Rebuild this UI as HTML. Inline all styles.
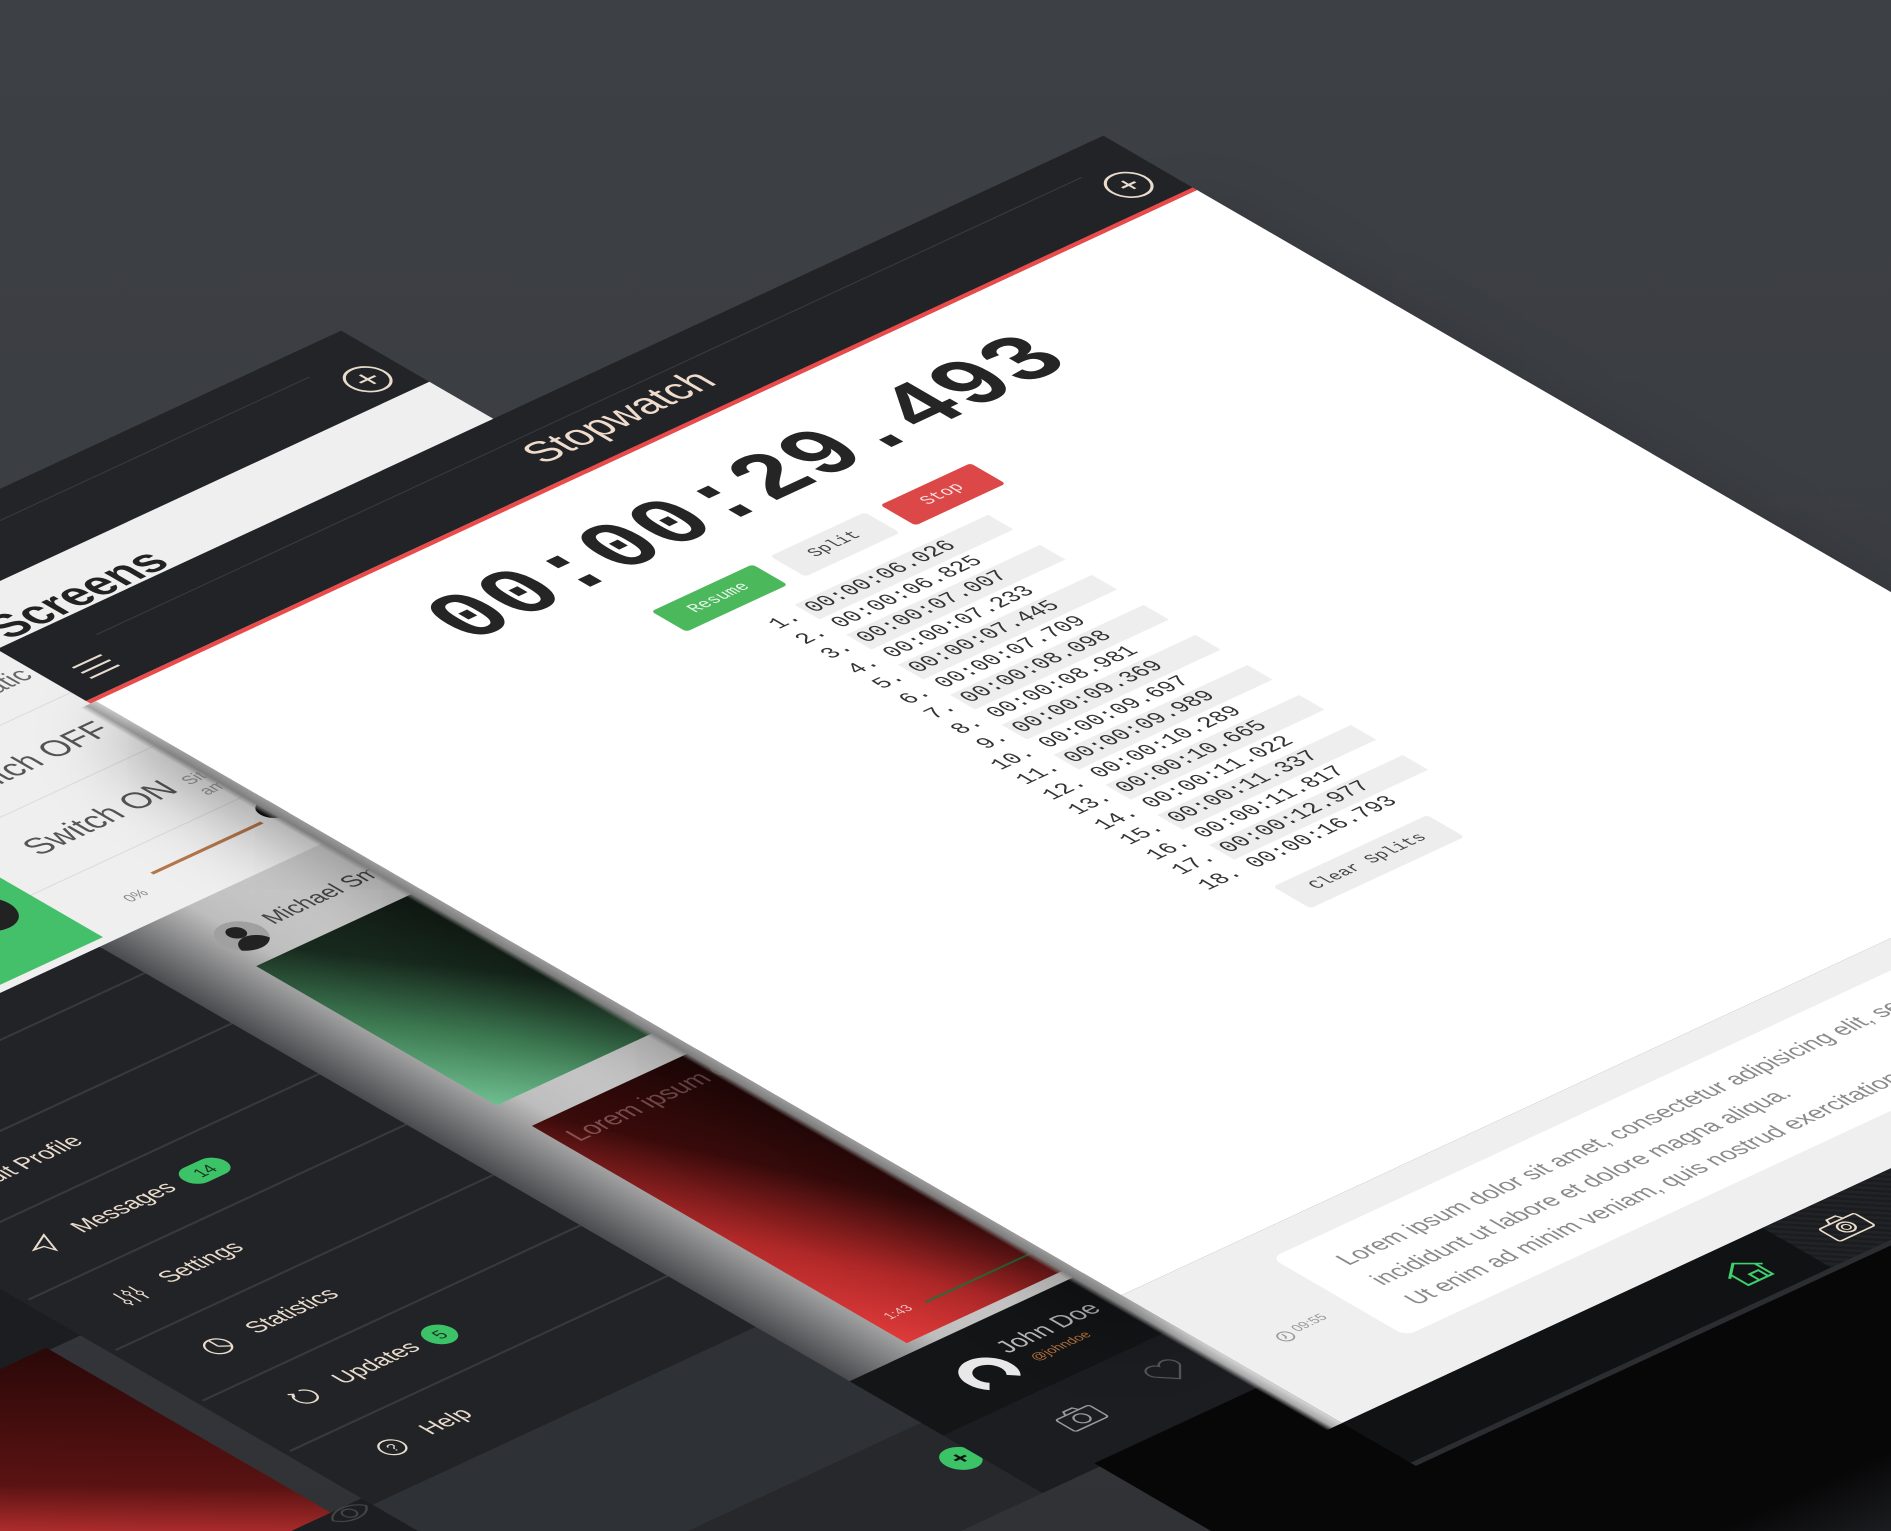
<!DOCTYPE html>
<html style="width:1891px;height:1531px;overflow:hidden;"><head><meta charset="utf-8">
<style>
html,body{margin:0;padding:0;}
body{width:1891px;height:1531px;overflow:hidden;position:relative;background:linear-gradient(180deg,#3d4045 0%,#393c41 55%,#303236 100%);font-family:"Liberation Sans",sans-serif;}
#clip{position:absolute;left:0;top:0;width:1891px;height:1531px;overflow:hidden;}
#scene{position:absolute;left:0;top:0;width:0;height:0;transform-origin:0 0;transform:matrix(1.101,-0.511,1.1027,0.639,96,701);}
.a{position:absolute;}
.mono{font-family:"Liberation Mono",monospace;}
.row{position:absolute;left:396px;font-family:"Liberation Mono",monospace;font-size:18px;line-height:23px;color:#333;white-space:pre;}
.bar{position:absolute;left:436px;width:176px;height:23px;background:#eeeeee;}
.sep{position:absolute;left:-555px;width:343px;height:1.5px;background:#38393e;}
.mi{position:absolute;left:-470px;font-size:19px;color:#eadccc;line-height:24px;}
.ic{position:absolute;}
</style></head><body>
<div id="clip">
<div id="scene">

<!-- ===== LEFT SCREEN ===== -->
<div class="a" style="left:-900px;top:-223px;width:1346px;height:80px;background:#232428;"></div>
<div class="a" style="left:-900px;top:-196px;width:1290px;height:1px;background:#3a3b40;"></div>
<svg class="ic" style="left:399px;top:-188px" width="36" height="36" viewBox="0 0 36 36"><circle cx="18" cy="18" r="15" fill="none" stroke="#eadccc" stroke-width="2"/><path d="M18 11v14M11 18h14" stroke="#eadccc" stroke-width="2"/></svg>
<div class="a" style="left:-900px;top:-143px;width:1346px;height:360px;background:#efefef;"></div>
<div class="a" style="left:-75px;top:-122px;font-size:38px;font-weight:bold;color:#222;line-height:44px;white-space:nowrap;">App Screens</div>
<div class="a" style="left:-310px;top:-66px;width:300px;text-align:right;font-size:22px;color:#666;white-space:nowrap;">Presentation static</div>
<div class="a" style="left:-900px;top:-18px;width:900px;height:1px;background:#dcdcdc;"></div>
<div class="a" style="left:-900px;top:62px;width:900px;height:1px;background:#dcdcdc;"></div>
<div class="a" style="left:-900px;top:142px;width:900px;height:1px;background:#dcdcdc;"></div>
<div class="a" style="left:-300px;top:10px;width:300px;text-align:right;font-size:27px;color:#555;white-space:nowrap;padding-right:18px;box-sizing:border-box;">Switch OFF</div>
<div class="a" style="left:-8px;top:20px;font-size:14px;color:#999;">Lorem</div>
<div class="a" style="left:-318px;top:88px;width:300px;text-align:right;font-size:27px;color:#555;white-space:nowrap;padding-right:18px;box-sizing:border-box;">Switch ON</div>
<div class="a" style="left:-26px;top:98px;font-size:14px;color:#999;">Sit amet</div>
<div class="a" style="left:-520px;top:96px;width:318px;height:112px;background:#45c06a;"></div>
<div class="a" style="left:-262px;top:120px;width:42px;height:42px;border-radius:50%;background:#222;"></div>
<div class="a" style="left:-158px;top:178px;font-size:12px;color:#888;">0%</div>
<div class="a" style="left:-122px;top:171px;width:100px;height:3px;background:#b5764a;"></div>
<div class="a" style="left:-16px;top:154px;width:22px;height:22px;border-radius:50%;background:#111;"></div>

<!-- left-most column -->
<div class="a" style="left:-900px;top:215px;width:345px;height:330px;background:#1c1d20;"></div>
<div class="a" style="left:-900px;top:542px;width:312px;height:260px;background:linear-gradient(to top right,#f24848 0%,#e03c3c 35%,#5a1212 58%,#2a0808 100%);"></div>
<div class="a" style="left:-900px;top:800px;width:345px;height:400px;background:#1d1e21;"></div>
<svg class="ic" style="left:-596px;top:795px" width="34" height="26" viewBox="0 0 34 26"><path d="M2 13C8 3 26 3 32 13C26 23 8 23 2 13Z" fill="none" stroke="#444" stroke-width="1.5"/><circle cx="17" cy="13" r="5" fill="none" stroke="#444" stroke-width="1.5"/></svg>

<!-- drawer -->
<div class="a" style="left:-560px;top:215px;width:348px;height:595px;background:#222327;"></div>
<div class="sep" style="top:255px"></div><div class="sep" style="top:334px"></div><div class="sep" style="top:413px"></div><div class="sep" style="top:492px"></div><div class="sep" style="top:571px"></div><div class="sep" style="top:650px"></div><div class="sep" style="top:729px"></div>
<div class="mi" style="left:-482px;top:362px;">Edit Profile</div>
<svg class="ic" style="left:-512px;top:440px" width="24" height="24" viewBox="0 0 24 24"><path d="M3 12L21 3L14 21L11 13Z" fill="none" stroke="#eadccc" stroke-width="1.5"/></svg>
<div class="mi" style="top:440px;">Messages</div>
<div class="a" style="left:-373px;top:441px;width:38px;height:22px;border-radius:11px;background:#3cc367;color:#1d3322;font-size:14px;line-height:22px;text-align:center;">14</div>
<svg class="ic" style="left:-512px;top:519px" width="24" height="24" viewBox="0 0 24 24"><path d="M5 3v18M12 3v18M19 3v18" stroke="#eadccc" stroke-width="1.3"/><circle cx="5" cy="16" r="2.2" fill="#222327" stroke="#eadccc"/><circle cx="12" cy="8" r="2.2" fill="#222327" stroke="#eadccc"/><circle cx="19" cy="13" r="2.2" fill="#222327" stroke="#eadccc"/></svg>
<div class="mi" style="top:519px;">Settings</div>
<svg class="ic" style="left:-512px;top:598px" width="24" height="24" viewBox="0 0 24 24"><circle cx="12" cy="12" r="9" fill="none" stroke="#eadccc" stroke-width="1.5"/><path d="M12 12V3M12 12L19 17" stroke="#eadccc" stroke-width="1.5"/></svg>
<div class="mi" style="top:598px;">Statistics</div>
<svg class="ic" style="left:-512px;top:677px" width="24" height="24" viewBox="0 0 24 24"><path d="M8 5A8 8 0 1 0 14 4" fill="none" stroke="#eadccc" stroke-width="1.5"/><path d="M5 3L8 5L6 8" fill="none" stroke="#eadccc" stroke-width="1.5"/></svg>
<div class="mi" style="top:677px;">Updates</div>
<div class="a" style="left:-390px;top:677px;width:24px;height:24px;border-radius:12px;background:#3cc367;color:#1d3322;font-size:14px;line-height:24px;text-align:center;">5</div>
<svg class="ic" style="left:-512px;top:756px" width="24" height="24" viewBox="0 0 24 24"><circle cx="12" cy="12" r="9" fill="none" stroke="#eadccc" stroke-width="1.5"/><text x="12" y="16.5" font-size="12" text-anchor="middle" fill="#eadccc" font-family="Liberation Sans">?</text></svg>
<div class="mi" style="top:756px;">Help</div>
<div class="a" style="left:-560px;top:810px;width:410px;height:150px;background:#2e3135;"></div>
<div class="a" style="left:-560px;top:960px;width:410px;height:110px;background:#26282b;"></div>
<div class="a" style="left:-237px;top:993px;width:28px;height:28px;border-radius:50%;background:#3cc367;color:#111;font-size:20px;line-height:28px;text-align:center;font-weight:bold;">+</div>

<!-- card column -->
<div class="a" style="left:-212px;top:215px;width:232px;height:685px;background:linear-gradient(to right,#4a4b4e 0%,#bdbdbd 35%,#e2e2e2 100%);"></div>
<div class="a" style="left:-149px;top:245px;width:36px;height:36px;border-radius:50%;background:#a0a0a0;overflow:hidden;"><div style="position:absolute;left:11px;top:6px;width:14px;height:14px;border-radius:50%;background:#222;"></div><div style="position:absolute;left:5px;top:20px;width:26px;height:20px;border-radius:13px 13px 0 0;background:#222;"></div></div>
<div class="a" style="left:-105px;top:250px;font-size:19px;color:#444;white-space:nowrap;">Michael Smith</div>
<div class="a" style="left:-150px;top:295px;width:175px;height:218px;background:linear-gradient(to top right,#6fbf90 0%,#3d7a52 30%,#182a1e 60%,#121a14 100%);"></div>
<div class="a" style="left:-150px;top:545px;width:175px;height:340px;background:linear-gradient(to top right,#e03a3a 0%,#b02828 25%,#3a0b0b 55%,#1a0606 100%);"></div>
<div class="a" style="left:-140px;top:560px;font-size:21px;color:rgba(255,200,200,.35);white-space:nowrap;">Lorem ipsum dolor</div>
<div class="a" style="left:-138px;top:849px;font-size:11px;color:#f0c0c0;">1:43</div>
<div class="a" style="left:-105px;top:856px;width:130px;height:2px;background:#2e6b3a;"></div>
<div class="a" style="left:-212px;top:895px;width:232px;height:85px;background:#141517;"></div>
<div class="a" style="left:-155px;top:925px;width:40px;height:40px;border-radius:50%;border:9px solid #e8e8e8;border-bottom-color:transparent;box-sizing:border-box;"></div>
<div class="a" style="left:-108px;top:918px;font-size:20px;color:#bbb;white-space:nowrap;">John Doe</div>
<div class="a" style="left:-100px;top:944px;font-size:11px;color:#b8743f;">@johndoe</div>
<div class="a" style="left:-212px;top:980px;width:232px;height:90px;background:#1c1d21;"></div>
<svg class="ic" style="left:-144px;top:1006px" width="34" height="26" viewBox="0 0 34 26"><rect x="2" y="6" width="30" height="18" rx="2" fill="none" stroke="#999" stroke-width="1.5"/><path d="M11 6L13 2H21L23 6" fill="none" stroke="#999" stroke-width="1.5"/><circle cx="17" cy="15" r="5.5" fill="none" stroke="#999" stroke-width="1.5"/></svg>
<svg class="ic" style="left:-58px;top:1002px" width="30" height="26" viewBox="0 0 30 26"><path d="M15 24L3 12A6.5 6.5 0 0 1 15 5A6.5 6.5 0 0 1 27 12Z" fill="none" stroke="#555" stroke-width="1.5"/></svg>

<!-- black void under main panel -->
<div class="a" style="left:-160px;top:1065px;width:1900px;height:500px;background:linear-gradient(to bottom,#070708 0%,#070708 62%,#1f2023 78%,#2c2e32 92%);"></div>

<!-- ===== MAIN PANEL ===== -->
<div class="a" style="left:-14px;top:0;width:14px;height:1130px;background:linear-gradient(to right,rgba(0,0,0,0),#a8a8a8 40%,#d6d6d6);"></div>
<div class="a" style="left:0;top:0;width:1000px;height:930px;background:#fff;box-shadow:-30px 30px 60px rgba(0,0,0,.35);"></div>
<div class="a" style="left:0;top:930px;width:1000px;height:200px;background:#efefef;"></div>
<div class="a" style="left:108px;top:958px;width:900px;height:122px;background:#fff;border-radius:8px;"></div>
<div class="a" style="left:140px;top:975px;font-size:19.5px;line-height:31px;color:#8a8a8a;white-space:nowrap;">Lorem ipsum dolor sit amet, consectetur adipisicing elit, sed do eiusmod tempor<br>incididunt ut labore et dolore magna aliqua.<br>Ut enim ad minim veniam, quis nostrud exercitation ullamco laboris nisi ut</div>
<svg class="ic" style="left:40px;top:1025px" width="14" height="14" viewBox="0 0 14 14"><circle cx="7" cy="7" r="5.5" fill="none" stroke="#999" stroke-width="1.2"/><path d="M7 3.5V7L5 9" stroke="#999" stroke-width="1.2" fill="none"/></svg>
<div class="a" style="left:57px;top:1024px;font-size:11px;color:#999;">09:55</div>

<!-- header -->
<div class="a" style="left:-5px;top:-85px;width:1005px;height:81px;background:#222327;"></div>
<div class="a" style="left:-5px;top:-4px;width:1005px;height:4px;background:#ea4a4a;"></div>
<div class="a" style="left:58px;top:-58px;width:895px;height:1px;background:#3a3b40;"></div>
<div class="a" style="left:17px;top:-39px;width:26px;height:2px;background:#eadccc;"></div>
<div class="a" style="left:17px;top:-31px;width:26px;height:2px;background:#eadccc;"></div>
<div class="a" style="left:17px;top:-23px;width:26px;height:2px;background:#eadccc;"></div>
<div class="a" style="left:361px;top:-58px;width:300px;text-align:center;font-size:34px;line-height:44px;color:#f0dccc;">Stopwatch</div>
<svg class="ic" style="left:952px;top:-50px" width="36" height="36" viewBox="0 0 36 36"><circle cx="18" cy="18" r="15" fill="none" stroke="#eadccc" stroke-width="2"/><path d="M18 12v12M12 18h12" stroke="#eadccc" stroke-width="2"/></svg>

<!-- time -->
<div class="a mono" style="left:240px;top:40px;font-size:76px;line-height:80px;font-weight:bold;color:#252525;white-space:nowrap;">00:00:29.493</div>

<!-- buttons -->
<div class="a mono" style="left:358px;top:146px;width:92px;height:32px;background:#4cb85c;border-radius:3px;color:#e9f7ea;font-size:14px;line-height:32px;text-align:center;">Resume</div>
<div class="a mono" style="left:466px;top:146px;width:86px;height:32px;background:#ededed;border-radius:3px;color:#444;font-size:14px;line-height:32px;text-align:center;">Split</div>
<div class="a mono" style="left:566px;top:146px;width:82px;height:32px;background:#dc4848;border-radius:3px;color:#fbe3e3;font-size:14px;line-height:32px;text-align:center;">Stop</div>

<!-- splits -->
<div class="bar" style="top:198px"></div><div class="bar" style="top:245px"></div><div class="bar" style="top:292px"></div><div class="bar" style="top:339px"></div><div class="bar" style="top:386px"></div><div class="bar" style="top:433px"></div><div class="bar" style="top:480px"></div><div class="bar" style="top:527px"></div><div class="bar" style="top:574px"></div>
<div class="row" style="top:198px"> 1. 00:00:06.026</div>
<div class="row" style="top:221.5px"> 2. 00:00:06.825</div>
<div class="row" style="top:245px"> 3. 00:00:07.007</div>
<div class="row" style="top:268.5px"> 4. 00:00:07.233</div>
<div class="row" style="top:292px"> 5. 00:00:07.445</div>
<div class="row" style="top:315.5px"> 6. 00:00:07.709</div>
<div class="row" style="top:339px"> 7. 00:00:08.098</div>
<div class="row" style="top:362.5px"> 8. 00:00:08.981</div>
<div class="row" style="top:386px"> 9. 00:00:09.369</div>
<div class="row" style="top:409.5px">10. 00:00:09.697</div>
<div class="row" style="top:433px">11. 00:00:09.989</div>
<div class="row" style="top:456.5px">12. 00:00:10.289</div>
<div class="row" style="top:480px">13. 00:00:10.665</div>
<div class="row" style="top:503.5px">14. 00:00:11.022</div>
<div class="row" style="top:527px">15. 00:00:11.337</div>
<div class="row" style="top:550.5px">16. 00:00:11.817</div>
<div class="row" style="top:574px">17. 00:00:12.977</div>
<div class="row" style="top:597.5px">18. 00:00:16.793</div>
<div class="a mono" style="left:432px;top:636px;width:140px;height:34px;background:#ededed;border-radius:3px;color:#444;font-size:14px;line-height:34px;text-align:center;">Clear Splits</div>

<!-- tab bar -->
<div class="a" style="left:0;top:1130px;width:1000px;height:62px;background:#111214;"></div>
<div class="a" style="left:382px;top:1130px;width:618px;height:62px;background:repeating-linear-gradient(45deg,#1b1c1f 0 3px,#222326 3px 6px);"></div>
<div class="a" style="left:0;top:1192px;width:1000px;height:5px;background:#2c2d31;"></div>
<svg class="ic" style="left:318px;top:1145px" width="36" height="32" viewBox="0 0 36 32"><path d="M3 16L18 4L33 16M7 13V29H29V13M17 29V20H25V29" fill="none" stroke="#3fcf6e" stroke-width="2"/></svg>
<svg class="ic" style="left:407px;top:1147px" width="36" height="28" viewBox="0 0 36 28"><rect x="2" y="7" width="32" height="19" rx="2" fill="none" stroke="#eadccc" stroke-width="1.6"/><path d="M12 7L14 2H22L24 7" fill="none" stroke="#eadccc" stroke-width="1.6"/><circle cx="18" cy="16" r="6" fill="none" stroke="#eadccc" stroke-width="1.6"/><circle cx="18" cy="16" r="3" fill="none" stroke="#eadccc" stroke-width="1.2"/></svg>

</div>
</div>
</body></html>
